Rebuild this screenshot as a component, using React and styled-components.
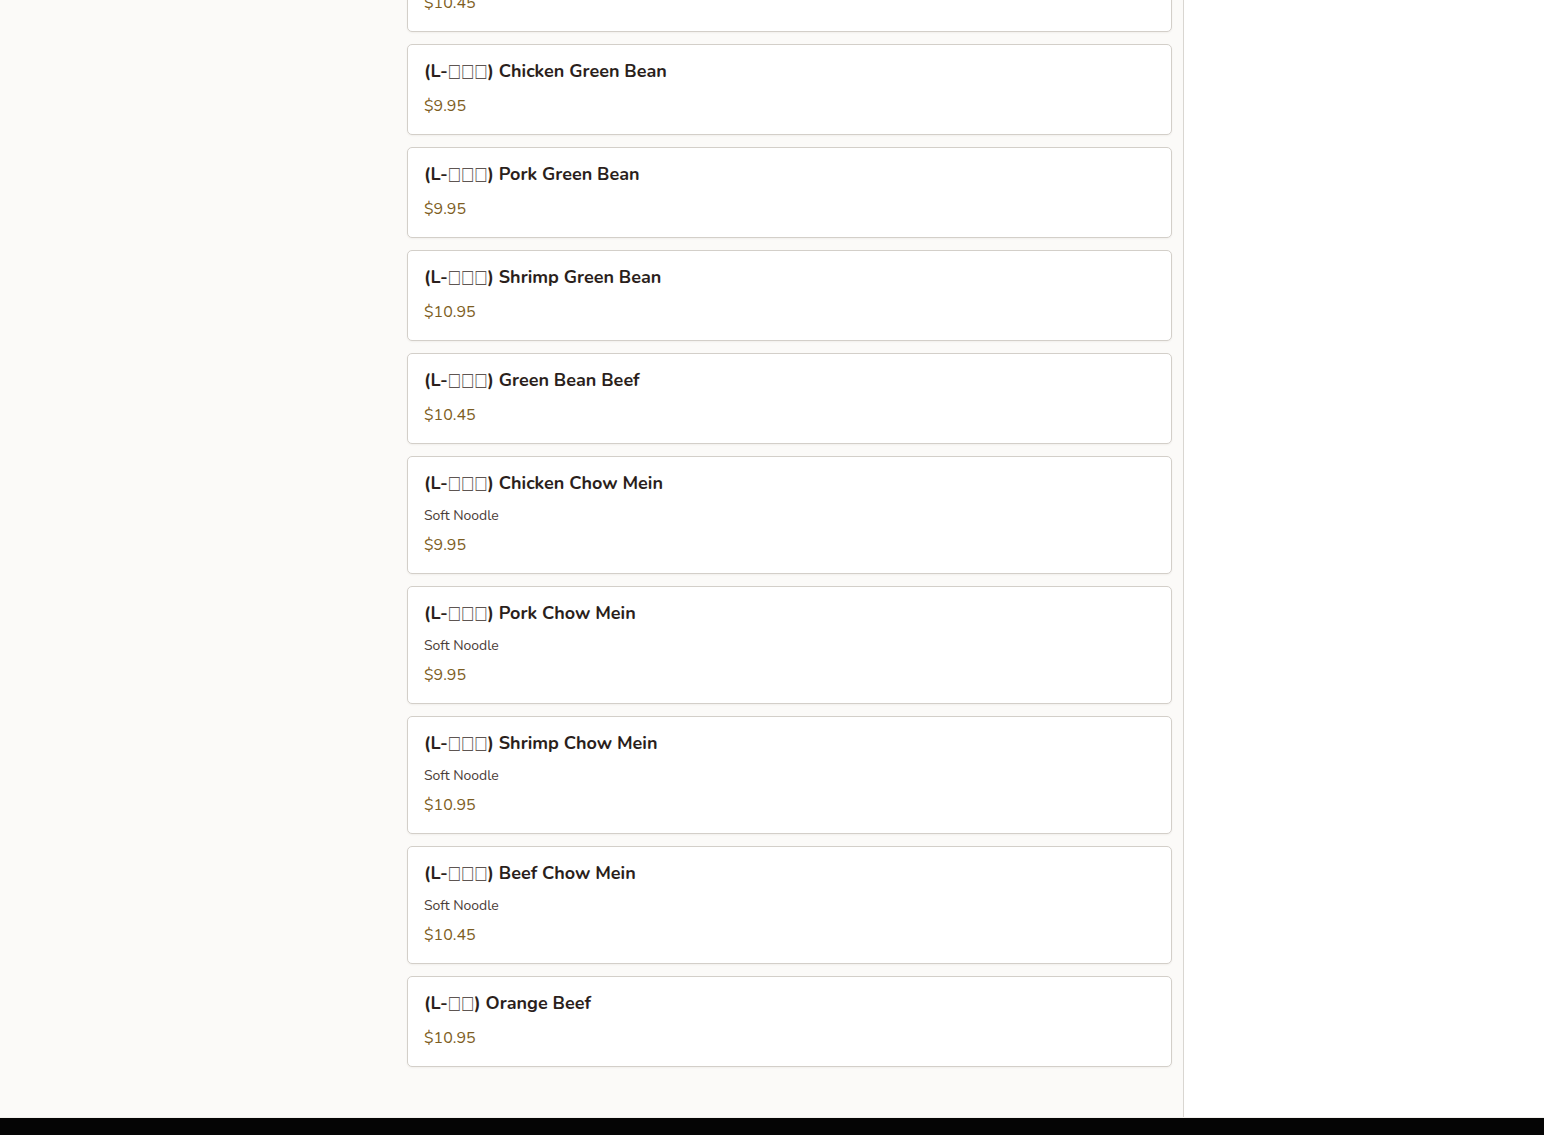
import React from 'react';
import styled, { createGlobalStyle } from 'styled-components';

const GlobalStyle = createGlobalStyle`
  html, body {
    margin: 0;
    padding: 0;
    background: #ffffff;
  }
  body {
    font-family: 'Nunito', 'Lato', 'Noto Sans', 'DejaVu Sans', sans-serif;
    overflow: hidden;
  }
`;

const Page = styled.div`
  display: flex;
  flex-direction: column;
  height: 1135px;
  overflow: hidden;
`;

const Layout = styled.div`
  display: grid;
  grid-template-columns: 1184px 360px;
  flex: 0 0 auto;
`;

const Main = styled.main`
  display: grid;
  grid-template-columns: 407px 1fr;
  padding-right: 11px;
  background: #fbfaf8;
  border-right: 1px solid #d9d6d1;
`;

const Sidebar = styled.aside`
  background: #ffffff;
`;

const CategoryNav = styled.nav``;

const ItemList = styled.div`
  display: flex;
  flex-direction: column;
  gap: 12px;
  margin-top: -59px;
  padding-bottom: 50px;
`;

const Card = styled.div`
  background: #ffffff;
  border: 1px solid #d3cfc9;
  border-radius: 5px;
  padding: 14px 16px 16px;
  box-shadow: 0 1px 2px rgba(60, 40, 20, 0.05);
`;

const ItemName = styled.h3`
  margin: 0 0 11px;
  height: 24px;
  font-size: 18px;
  line-height: 24px;
  font-weight: 700;
  color: #2b1f1c;
  white-space: nowrap;
`;

const Tofu = styled.span`
  display: inline-block;
  font-family: 'DejaVu Sans', sans-serif;
  font-weight: 400;
  font-size: 14px;
  line-height: 1;
  transform: scaleY(1.35);
  transform-origin: 50% 80%;
  color: #5e5552;
`;

const ItemDesc = styled.p`
  margin: 0 0 7px;
  height: 20px;
  font-size: 14px;
  line-height: 20px;
  color: #4a3c37;
`;

const ItemPrice = styled.div`
  height: 24px;
  font-size: 16px;
  line-height: 24px;
  color: #7d5d22;
`;

const Footer = styled.footer`
  background: #050505;
  height: 220px;
  border-top: 1px solid #f3f1ee;
`;

const items = [
  { tag: '□□□', name: 'Beef Green Pepper', price: '$10.45' },
  { tag: '□□□', name: 'Chicken Green Bean', price: '$9.95' },
  { tag: '□□□', name: 'Pork Green Bean', price: '$9.95' },
  { tag: '□□□', name: 'Shrimp Green Bean', price: '$10.95' },
  { tag: '□□□', name: 'Green Bean Beef', price: '$10.45' },
  { tag: '□□□', name: 'Chicken Chow Mein', desc: 'Soft Noodle', price: '$9.95' },
  { tag: '□□□', name: 'Pork Chow Mein', desc: 'Soft Noodle', price: '$9.95' },
  { tag: '□□□', name: 'Shrimp Chow Mein', desc: 'Soft Noodle', price: '$10.95' },
  { tag: '□□□', name: 'Beef Chow Mein', desc: 'Soft Noodle', price: '$10.45' },
  { tag: '□□', name: 'Orange Beef', price: '$10.95' },
];

export default function App() {
  return (
    <Page>
      <GlobalStyle />
      <Layout>
        <Main>
          <CategoryNav />
          <ItemList>
            {items.map((item, i) => (
              <Card key={i}>
                <ItemName>
                  (L-<Tofu>{item.tag}</Tofu>) {item.name}
                </ItemName>
                {item.desc && <ItemDesc>{item.desc}</ItemDesc>}
                <ItemPrice>{item.price}</ItemPrice>
              </Card>
            ))}
          </ItemList>
        </Main>
        <Sidebar />
      </Layout>
      <Footer />
    </Page>
  );
}
